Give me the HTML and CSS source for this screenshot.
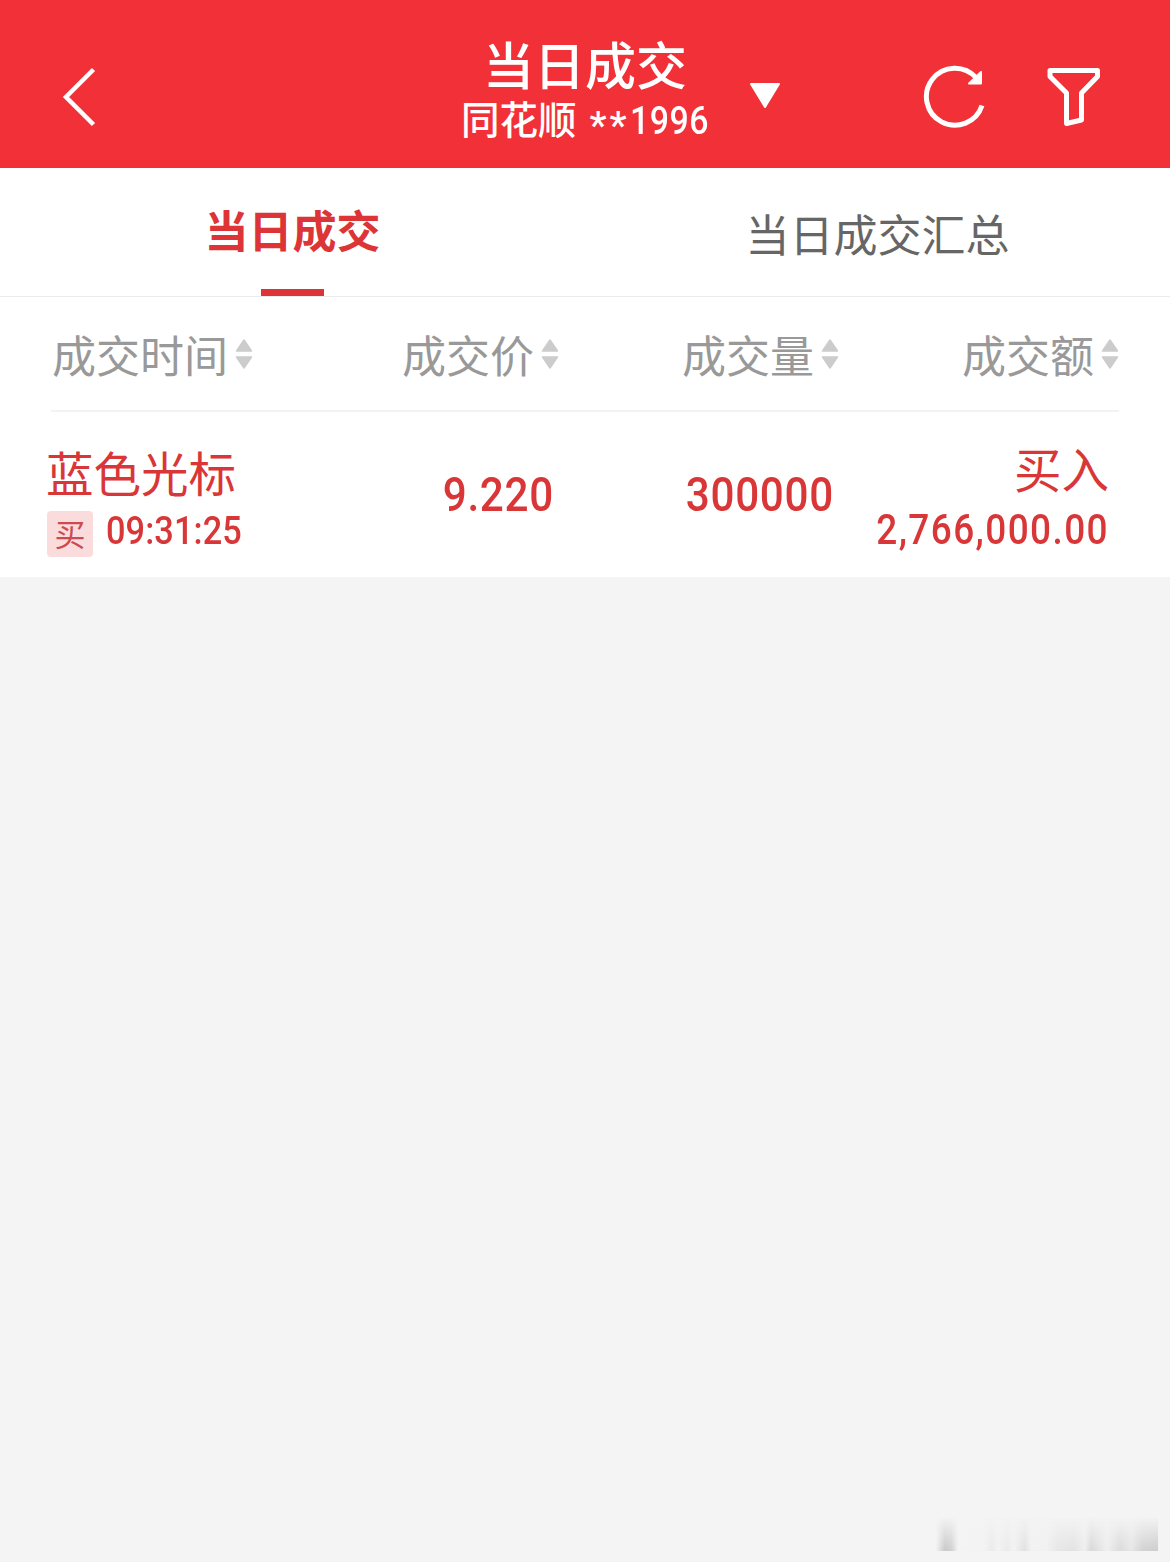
FILE: index.html
```html
<!DOCTYPE html>
<html lang="zh-CN">
<head>
    <meta charset="UTF-8">
    <meta name="viewport" content="width=device-width, initial-scale=1.0">
    <title>当日成交</title>
    <link rel="stylesheet" href="styles.css">
</head>
<body>
    <header class="header">
        <svg class="back" viewBox="0 0 40 64" aria-hidden="true">
            <path d="M35.500 4.500 8 32 35.500 59.500"/>
        </svg>
        <div class="title">
            <h1>当日成交</h1>
            <div class="account"><span>同花顺</span><span class="stars">**</span><span class="num number">1996</span></div>
        </div>
        <svg class="caret" viewBox="0 0 34 28" aria-hidden="true">
            <path d="M3 2h28L17 25z"/>
        </svg>
        <div class="actions">
            <svg class="icon" viewBox="0 0 66 66" aria-hidden="true">
                <path d="M60 42.500A28.500 28.500 0 1 1 54 14.500"/>
                <path class="solid" d="M59 9v11.500H47z"/>
            </svg>
            <svg class="icon" viewBox="0 0 66 66" aria-hidden="true">
                <path d="M8 7.500h47.500v6L39.500 30v27L24.500 60.500V30L8 13.500z"/>
            </svg>
        </div>
    </header>
    <nav class="tabs">
        <a class="tab active">当日成交</a>
        <a class="tab">当日成交汇总</a>
    </nav>
    <main class="list">
        <div class="row head">
            <div class="cell">成交时间<svg class="sort" viewBox="0 0 18 32"><path d="M9 2l7.500 11h-15zM9 30l7.500-11h-15z"/></svg></div>
            <div class="cell">成交价<svg class="sort" viewBox="0 0 18 32"><path d="M9 2l7.500 11h-15zM9 30l7.500-11h-15z"/></svg></div>
            <div class="cell">成交量<svg class="sort" viewBox="0 0 18 32"><path d="M9 2l7.500 11h-15zM9 30l7.500-11h-15z"/></svg></div>
            <div class="cell">成交额<svg class="sort" viewBox="0 0 18 32"><path d="M9 2l7.500 11h-15zM9 30l7.500-11h-15z"/></svg></div>
        </div>
        <div class="row deal">
            <div class="stock">
                <div class="name">蓝色光标</div>
                <div class="time"><span class="badge">买</span><span class="num">09:31:25</span></div>
            </div>
            <div class="value num">9.220</div>
            <div class="value num">300000</div>
            <div class="total">
                <div class="side">买入</div>
                <div class="amount num">2,766,000.00</div>
            </div>
        </div>
    </main>
    <footer class="footer">
        <div class="smudge"></div>
    </footer>
</body>
</html>
```
FILE: styles.css
```css
* {
    box-sizing: border-box;
}
body {
    margin: 0;
    min-height: 1562px;
    display: flex;
    flex-direction: column;
    background: #f4f4f4;
    color: #d93638;
    font-family: Roboto, "Noto Sans CJK SC", sans-serif;
}
svg {
    display: block;
    flex: none;
}
/* narrow figures */
.num {
    transform: scaleX(0.88);
    transform-origin: left;
    font-weight: 500;
}
.header {
    height: 168px;
    display: grid;
    grid-template-columns: 460px 250px 211px 1fr;
    background: #f23037;
    color: #fff;
}
.back {
    width: 40px;
    height: 64px;
    margin: 65px 0 0 58px;
    fill: none;
    stroke: #fff;
    stroke-width: 4.5;
}
.title {
    padding-top: 38px;
    text-align: center;
}
h1 {
    margin: 0;
    font-size: 51px;
    line-height: 60px;
    font-weight: 500;
}
.account {
    display: flex;
    padding-left: 1px;
    font-size: 38.5px;
    line-height: 46px;
    font-weight: 500;
    white-space: nowrap;
}
.stars {
    margin-left: 13px;
    padding-top: 5px;
    letter-spacing: 3px;
}
.number {
    letter-spacing: 0.6px;
}
.caret {
    width: 34px;
    height: 28px;
    margin: 82px 0 0 38px;
    fill: #fff;
    stroke: #fff;
    stroke-width: 2;
    stroke-linejoin: round;
}
.actions {
    display: flex;
    gap: 54px;
    padding: 63px 0 0 1px;
}
.icon {
    width: 66px;
    height: 66px;
    fill: none;
    stroke: #fff;
    stroke-width: 5;
    stroke-linejoin: round;
}
.icon .solid {
    fill: #fff;
    stroke-width: 2;
}
.tabs {
    height: 129px;
    display: grid;
    grid-template-columns: 1fr 1fr;
    background: #fff;
    border-bottom: 1px solid #ececec;
}
.tab {
    display: flex;
    flex-direction: column;
    align-items: center;
    justify-content: space-between;
    padding-top: 37px;
    font-size: 44px;
    line-height: 64px;
    color: #666;
}
.tab.active {
    padding-top: 33px;
    font-weight: 700;
    color: #dd3437;
}
.tab.active::after {
    content: "";
    width: 63px;
    height: 7px;
    background: #dd3437;
}
.list {
    background: #fff;
}
.row {
    display: grid;
    grid-template-columns: 228px 280px 280px 280px;
}
.head {
    height: 115px;
    margin: 0 51px;
    padding-top: 29px;
    border-bottom: 2px solid #f3f3f3;
    color: #999;
    font-size: 44px;
    line-height: 64px;
}
.cell {
    display: flex;
    justify-content: flex-end;
}
.cell:first-child {
    justify-content: flex-start;
    padding-left: 1px;
}
.sort {
    width: 18px;
    height: 32px;
    margin: 12px 0 0 7px;
    fill: #ccc;
    stroke: #ccc;
    stroke-width: 1.5;
    stroke-linejoin: round;
}
.deal {
    height: 165px;
    padding-left: 46px;
}
.stock {
    padding-top: 32px;
}
.name,
.side {
    font-size: 47.5px;
    line-height: 64px;
}
.time {
    display: flex;
    gap: 13px;
    margin-top: 3px;
    padding-left: 1px;
    font-size: 39px;
    line-height: 40px;
    letter-spacing: 0.1px;
    white-space: nowrap;
}
.badge {
    width: 46px;
    height: 46px;
    border-radius: 4px;
    background: #fbdcdd;
    color: #cc4b50;
    font-size: 31px;
    line-height: 49px;
    letter-spacing: 0;
    text-align: center;
}
.value {
    padding-top: 53px;
    font-size: 48px;
    line-height: 60px;
    letter-spacing: 0.8px;
    text-align: right;
    transform-origin: right;
}
.total {
    padding: 28px 5px 0 0;
    text-align: right;
}
.amount {
    margin-top: 1px;
    font-size: 42px;
    line-height: 50px;
    letter-spacing: 1.6px;
    transform-origin: right;
}
.footer {
    margin-top: auto;
    padding: 0 12px 11px 0;
}
/* faded mark in the corner */
.smudge {
    width: 222px;
    height: 34px;
    margin-left: auto;
    background: linear-gradient(90deg, transparent 0, #c8c8c8 4%, #d0d0d0 7%, transparent 10%, #f2f2f2 22%, #eaeaea 25%, #f2f2f2 28%, #eaeaea 32%, #f2f2f2 35%, #e0e0e0 40%, #f2f2f2 43%, #f0f0f0 50%, #e6e6e6 55%, #e2e2e2 62%, #eee 67%, #d8d8d8 70%, #eee 77%, #dadada 83%, #e6e6e6 88%, #d2d2d2 93%, #ccc 100%);
    -webkit-mask-image: linear-gradient(transparent, #000);
    mask-image: linear-gradient(transparent, #000);
}
```
